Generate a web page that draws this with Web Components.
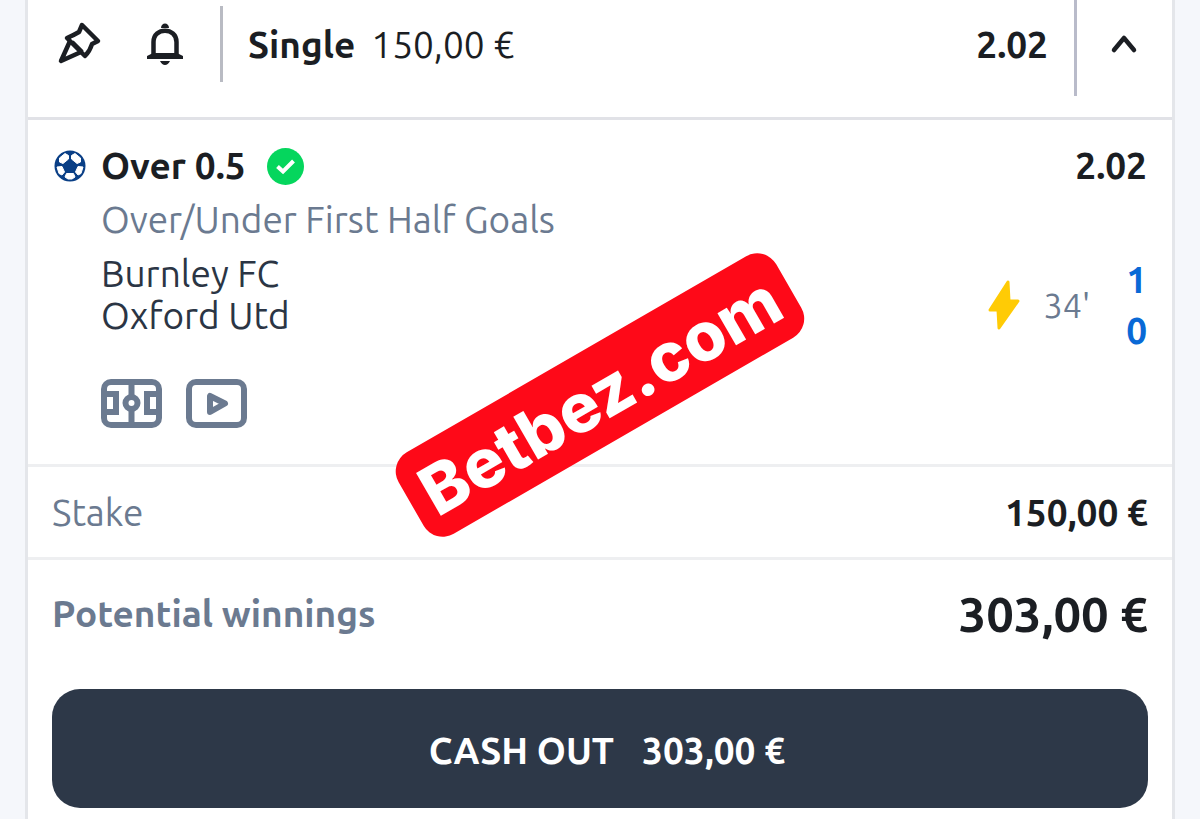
<!DOCTYPE html>
<html lang="en">
<head>
<meta charset="utf-8">
<meta name="viewport" content="width=device-width, initial-scale=1">
<title>Bet slip</title>
<style>
  html { height: 100%; }
  body {
    margin: 0; min-height: 100%; background: #f5f7fb; color: #1b1e23;
    font: 450 37px/44px Ubuntu, "Noto Sans", sans-serif;
    display: flex; flex-direction: column;
  }
</style>
</head>
<body>
<bet-slip>
  <slip-header slot="header" stake="150,00 €" odds="2.02">Single</slip-header>
  <bet-leg odds="2.02" minute="34'" home-score="1" away-score="0">
    Over 0.5
    <span slot="market">Over/Under First Half Goals</span>
    <span slot="home">Burnley FC</span>
    <span slot="away">Oxford Utd</span>
  </bet-leg>
  <slip-row label="Stake">150,00 €</slip-row>
  <slip-row label="Potential winnings" total>303,00 €</slip-row>
  <cash-out slot="footer" amount="303,00 €">CASH OUT</cash-out>
  <promo-tag slot="overlay">Betbez.com</promo-tag>
</bet-slip>

<script>
const define = (name, render) => customElements.define(name, class extends HTMLElement {
  connectedCallback() {
    if (this.shadowRoot) return;
    this.attachShadow({ mode: "open" }).innerHTML = render(this);
  }
});
const reset = `
  button { font: inherit; color: inherit; background: none; border: 0; margin: 0; padding: 0; cursor: pointer; }
  svg { display: block; }
`;

define("bet-slip", () => `
  <style>
    :host { display: flex; flex: 1; }
    article {
      position: relative; flex: 1; margin: 0 25px; background: #fff;
      border: solid #e4e6ea; border-width: 0 3px;
    }
    .overlay { position: absolute; left: 50%; top: 395px; transform: translate(-50%, -50%); }
  </style>
  <article>
    <slot name="header"></slot>
    <slot></slot>
    <slot name="footer"></slot>
    <div class="overlay"><slot name="overlay"></slot></div>
  </article>
`);

define("slip-header", el => `
  <style>${reset}
    :host { display: block; }
    header { display: flex; height: 117px; border-bottom: 3px solid #e1e2e7; }
    .tools { display: flex; gap: 44px; padding: 22px 36px 0 28px; align-items: start; }
    .main {
      flex: 1; display: flex; gap: 16px; height: 76px; margin-top: 6px; padding: 17px 26px 0 25px;
      box-sizing: border-box; border-left: 3px solid #b9bbc3;
    }
    h2 { margin: 0; font: inherit; font-weight: 700; }
    .odds { margin-left: auto; font-weight: 700; }
    .toggle { width: 98px; height: 96px; box-sizing: border-box; border-left: 3px solid #b9bbca; padding: 0 0 8px 33px; }
  </style>
  <header>
    <div class="tools">
      <button type="button" aria-label="Pin bet">
        <svg width="46" height="46" viewBox="0 0 46 46" fill="none" stroke="#1b1e23" stroke-width="4.500" stroke-linejoin="round">
          <path d="M26 3 42 19 36 22Q34 29 29 34L11 16Q18 13 23 10Z"/><path d="M14 19 5 39 25 30M16 20 26 30"/>
        </svg>
      </button>
      <button type="button" aria-label="Notifications">
        <svg width="38" height="46" viewBox="0 0 38 46" fill="none" stroke="#1b1e23" stroke-width="4.500" stroke-linejoin="round">
          <path d="M7.500 33V20C7.500 5 30.500 5 30.500 20V33"/><path d="M15 6C15 0 23 0 23 6ZM14 39H24Q22 43 19 43T14 39ZM1 37V34L7 31H31L37 34V37Z" fill="#1b1e23" stroke="none"/>
        </svg>
      </button>
    </div>
    <div class="main"><h2><slot></slot></h2><span>${el.getAttribute("stake")}</span><span class="odds">${el.getAttribute("odds")}</span></div>
    <button class="toggle" type="button" aria-label="Collapse bet">
      <svg width="28" height="20" viewBox="0 0 28 20" fill="none" stroke="#1b1e23" stroke-width="4.500" stroke-linecap="round" stroke-linejoin="round"><path d="M4 16 14 4 24 16"/></svg>
    </button>
  </header>
`);

define("bet-leg", el => `
  <style>${reset}
    :host { display: block; }
    section {
      display: grid; grid-template-columns: 49px 1fr auto; border-bottom: 3px solid #eeeff1;
      padding: 24px 25px 36px 24px;
    }
    .ball { align-self: center; padding-left: 2px; }
    .title { display: flex; align-items: center; gap: 21px; }
    h3 { margin: 0; font: inherit; font-weight: 700; }
    .odds { font-weight: 700; justify-self: end; }
    .market { grid-column: 2 / 4; color: #6b7a90; margin-top: 10px; }
    .teams { grid-column: 2; margin-top: 11px; line-height: 42px; color: #2b3544; }
    .live { display: flex; align-items: center; gap: 24px; margin-top: 12px; color: #6b7a90; }
    .minute { font-size: 34px; }
    .score { display: grid; line-height: 51px; margin-left: 12px; font-weight: 700; color: #0969d6; }
    .actions { grid-column: 2 / 4; display: flex; gap: 24px; margin-top: 22px; }
  </style>
  <section>
    <svg class="ball" width="32" height="32" viewBox="0 0 32 32" role="img" aria-label="Football">
      <circle cx="16" cy="16" r="15.500" fill="#0a3f86"/>
      <g fill="#fff" stroke="#fff" stroke-linejoin="round">
        <path d="M5.500 8 11 3.500 14.500 5.500V9L9 13.500 5.500 12Z"/><path d="M26.500 8 21 3.500 17.500 5.500V9L23 13.500 26.500 12Z"/>
        <path d="M3 17 8 16.500 10.500 22 8 25 5 23.500Z"/><path d="M29 17 24 16.500 21.500 22 24 25 27 23.500Z"/>
        <path d="M12.500 23.500H19.500L21 27 18 29H14L11 27Z"/>
      </g>
      <path d="M16 10 22 14.500 20 21H12L10 14.500Z" fill="#0a3f86"/>
    </svg>
    <div class="title">
      <h3><slot></slot></h3>
      <svg width="37" height="37" viewBox="0 0 37 37" role="img" aria-label="Won"><circle cx="18.500" cy="18.500" r="18.500" fill="#05d65d"/><path d="M10.500 18.500 16 23.500 26.500 13" fill="none" stroke="#fff" stroke-width="4"/></svg>
    </div>
    <span class="odds">${el.getAttribute("odds")}</span>
    <div class="market"><slot name="market"></slot></div>
    <div class="teams"><div><slot name="home"></slot></div><div><slot name="away"></slot></div></div>
    <div class="live">
      <svg width="32" height="50" viewBox="0 0 32 50" role="img" aria-label="Live"><path d="M20 2 21 21H30L11 48 10 30H2Z" fill="#ffcb05" stroke="#ffcb05" stroke-width="3" stroke-linejoin="round"/></svg>
      <span class="minute">${el.getAttribute("minute")}</span>
      <div class="score"><span>${el.getAttribute("home-score")}</span><span>${el.getAttribute("away-score")}</span></div>
    </div>
    <div class="actions">
      <button type="button" aria-label="Match centre">
        <svg width="61" height="50" viewBox="0 0 61 50" fill="none" stroke="#6b7a90" stroke-width="6"><rect x="3" y="4" width="55" height="43" rx="7"/><path d="M30.500 3V18M30.500 32V47M4 16H15V34H4M57 16H46V34H57"/><circle cx="30.500" cy="25" r="6"/></svg>
      </button>
      <button type="button" aria-label="Watch live">
        <svg width="61" height="50" viewBox="0 0 61 50" fill="none" stroke="#6b7a90" stroke-width="6" stroke-linejoin="round"><rect x="3" y="4" width="55" height="43" rx="7"/><path d="M24 18V34L39 25.500Z"/></svg>
      </button>
    </div>
  </section>
`);

define("slip-row", el => `
  <style>
    :host { display: block; }
    dl { display: flex; justify-content: space-between; align-items: center; margin: 0; padding: 24px 24px 22px; border-bottom: 3px solid #eeeff1; }
    dt { color: #6b7a90; }
    dd { margin: 0; font-weight: 700; }
    :host([total]) dl { border: 0; padding: 24px 24px 45px; line-height: 60px; }
    :host([total]) dt { font-weight: 700; }
    :host([total]) dd { font-size: 49px; }
  </style>
  <dl><dt>${el.getAttribute("label")}</dt><dd><slot></slot></dd></dl>
`);

define("cash-out", el => `
  <style>${reset}
    :host { display: block; padding: 0 24px 11px; }
    button {
      display: flex; justify-content: center; align-items: center; gap: 28px; width: 100%; height: 119px;
      padding: 4px 0 0 14px; border-radius: 28px; background: #2d3848; color: #fff; font-weight: 600;
    }
  </style>
  <button type="button"><span><slot></slot></span><span>${el.getAttribute("amount")}</span></button>
`);

define("promo-tag", () => `
  <style>
    :host {
      display: block; transform: rotate(-30deg); padding: 0 16px; border-radius: 22px;
      background: #fe0918; color: #fff; font: 800 68px/94px Inter, sans-serif; white-space: nowrap;
    }
  </style>
  <slot></slot>
`);
</script>
</body>
</html>
